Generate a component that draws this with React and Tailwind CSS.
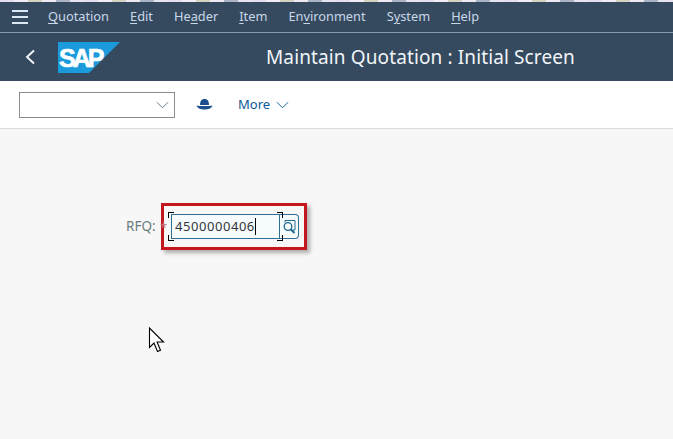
const font = { fontFamily: '"Noto Sans", sans-serif' };

const menuItems = [
  { before: "", key: "Q", after: "uotation" },
  { before: "", key: "E", after: "dit" },
  { before: "He", key: "a", after: "der" },
  { before: "", key: "I", after: "tem" },
  { before: "En", key: "v", after: "ironment" },
  { before: "S", key: "y", after: "stem" },
  { before: "", key: "H", after: "elp" },
];

const stripColors = ["bg-[#e4dff0]", "bg-[#f0edf5]", "bg-[#d6d3c4]", "bg-[#eeeaf2]", "bg-[#a9b3c6]", "bg-[#e8e4ef]"];

const Chevron = ({ className }) => (
  <svg className={className} viewBox="0 0 14 8" fill="none" stroke="currentColor" strokeWidth="1">
    <path d="M1 1l6 6 6-6" />
  </svg>
);

const SapLogo = () => (
  <svg width="62" height="31" viewBox="0 0 62 31" className="ml-[22px]">
    <polygon points="0,0 62,0 31,31 0,31" fill="#1b9bdc" />
    <text x="1" y="24.5" fontFamily="Liberation Sans" fontWeight="700" fontSize="25" letterSpacing="-3" fill="#fff" stroke="#fff" strokeWidth="0.6">SAP</text>
  </svg>
);

const Bracket = ({ className }) => <div className={`absolute w-[6px] h-[6px] border-black ${className}`} />;

export default function App() {
  return (
    <div className="w-[673px] h-[439px] flex flex-col overflow-hidden bg-[#f7f7f7]" style={font}>
      {/* bit of the desktop showing above the window */}
      <div className="h-[2px] flex bg-[#e6e3ee]">
        {Array.from({ length: 48 }).map((_, i) => (
          <div key={i} className={`w-[14px] h-[2px] ${stripColors[i % 6]}`} />
        ))}
      </div>

      {/* menu bar */}
      <div className="h-[31px] flex items-center bg-[#354a5f] border-b border-[#8a9bad] text-[12.8px] text-[#c9d8e8]">
        <div className="ml-[12px] w-[16px] flex flex-col gap-[4px]">
          <div className="h-[2px] bg-[#dbe7f3]" />
          <div className="h-[2px] bg-[#dbe7f3]" />
          <div className="h-[2px] bg-[#dbe7f3]" />
        </div>
        <div className="ml-[20px] flex gap-[21px]">
          {menuItems.map((m) => (
            <span key={m.key + m.after}>
              {m.before}
              <span className="underline underline-offset-2">{m.key}</span>
              {m.after}
            </span>
          ))}
        </div>
      </div>

      {/* title bar */}
      <div className="h-[48px] flex items-center bg-[#354a5f]">
        <svg className="ml-[25px]" width="11" height="16" viewBox="0 0 11 16" fill="none" stroke="#eef3f8" strokeWidth="2">
          <path d="M9 1.500L2 8l7 6.500" />
        </svg>
        <SapLogo />
        <div className="ml-[146px] text-[19px] text-[#f2f5f8] tracking-[0.12px]">Maintain Quotation : Initial Screen</div>
      </div>

      {/* toolbar */}
      <div className="h-[48px] flex items-center bg-white border-b border-[#dcdcdc]">
        <div className="ml-[19px] w-[156px] h-[26px] flex items-center justify-end pr-[5px] bg-white border border-[#8c8c8c]">
          <Chevron className="w-[13px] h-[8px] text-[#5b738b]" />
        </div>
        <svg className="ml-[21px] -mt-[1px]" width="17" height="13" viewBox="0 0 17 13" fill="#1c4f8b">
          <path d="M4 7C4 2.500 6 1 8.500 1S13 2.500 13 7z" />
          <path d="M0.500 7.500C2.500 8.300 14.500 8.300 16.500 7.500 15.500 10.500 12 11.500 8.500 11.500S1.500 10.500 0.500 7.500z" />
        </svg>
        <div className="ml-[25px] flex items-center gap-[6px] text-[13px] text-[#0a5a94]">
          More
          <Chevron className="w-[13px] h-[8px] text-[#0a5a94]" />
        </div>
      </div>

      {/* form area */}
      <div className="relative flex-1">
        <div className="flex items-center pt-[74px] pl-[126px]">
          <span className="w-[35px] text-[13.5px] text-[#6a7d7d]">RFQ:</span>
          <div className="w-[146px] h-[47px] flex items-center pl-[7px] border-[3px] border-[#c4161f] shadow-[3px_3px_4px_rgba(0,0,0,0.3)]">
            <div className="relative w-[109px] h-[25px] flex items-center pl-[3px] bg-[#f6fbfe] border border-[#2f6f95] text-[13px] text-[#32363a]">
              <span className="tracking-[0.55px]">4500000406</span>
              <div className="w-[1px] h-[17px] bg-black" />
              <Bracket className="-left-[4px] -top-[3px] border-l-[1.5px] border-t-[1.5px]" />
              <Bracket className="-right-[4px] -top-[3px] border-r-[1.5px] border-t-[1.5px]" />
              <Bracket className="-left-[4px] -bottom-[3px] border-l-[1.5px] border-b-[1.5px]" />
              <Bracket className="-right-[4px] -bottom-[3px] border-r-[1.5px] border-b-[1.5px]" />
            </div>
            <div className="w-[19px] h-[25px] flex items-center justify-center bg-[#f6fbfe] border border-l-0 border-[#2f6f95] rounded-r-[4px]">
              <svg width="15" height="15" viewBox="0 0 15 15" fill="none" stroke="#1d6a8f" strokeWidth="1">
                <path d="M3 3.500V1.500h10v9.500h-2" />
                <circle cx="6" cy="7.500" r="3.800" strokeWidth="1.300" />
                <path d="M8.800 10.300l3.700 3.700" strokeWidth="2" />
              </svg>
            </div>
          </div>
        </div>
        {/* required star sits against the red annotation box */}
        <span className="absolute left-[160px] top-[89px] text-[13px] text-[#c0737b]">*</span>

        {/* mouse pointer */}
        <svg className="absolute left-[148px] top-[198px]" width="18" height="27" viewBox="0 0 18 27" fill="#fff" stroke="#000" strokeWidth="1.100">
          <path d="M1.500 1v19.500l4.500-4.500 3.500 8.500 3-1.300-3.400-8.200h6.400z" />
        </svg>
      </div>
    </div>
  );
}
